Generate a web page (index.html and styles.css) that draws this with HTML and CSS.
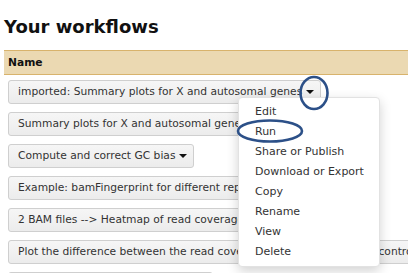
FILE: index.html
```html
<!DOCTYPE html>
<html lang="en">
<head>
    <meta charset="UTF-8">
    <title>Your workflows</title>
    <link rel="stylesheet" href="styles.css">
</head>
<body>
    <div class="page">
        <h2>Your workflows</h2>

        <table class="workflows">
            <thead>
                <tr><th>Name</th></tr>
            </thead>
            <tbody>
                <tr><td><div class="menubutton">imported: Summary plots for X and autosomal genes<span class="caret"></span></div></td></tr>
                <tr><td><div class="menubutton">Summary plots for X and autosomal genes<span class="caret"></span></div></td></tr>
                <tr><td><div class="menubutton">Compute and correct GC bias<span class="caret"></span></div></td></tr>
                <tr><td><div class="menubutton">Example: bamFingerprint for different replicates<span class="caret"></span></div></td></tr>
                <tr><td><div class="menubutton">2 BAM files --&gt; Heatmap of read coverage<span class="caret"></span></div></td></tr>
                <tr><td><div class="menubutton">Plot the difference between the read coverage of the ChIP-seq and control<span class="caret"></span></div></td></tr>
                <tr><td><div class="menubutton">Compute correlation of BAM files<span class="caret"></span></div></td></tr>
            </tbody>
        </table>

        <ul class="popmenu">
            <li>Edit</li>
            <li>Run</li>
            <li>Share or Publish</li>
            <li>Download or Export</li>
            <li>Copy</li>
            <li>Rename</li>
            <li>View</li>
            <li>Delete</li>
        </ul>

        <svg class="mark mark-caret" width="32" height="38" viewBox="0 0 32 38">
            <ellipse cx="16" cy="19" rx="13.5" ry="16" fill="none" stroke="#2c5088" stroke-width="2.6"/>
        </svg>
        <svg class="mark mark-run" width="70" height="26" viewBox="0 0 70 26">
            <ellipse cx="35" cy="13" rx="32" ry="10.5" fill="none" stroke="#2c5088" stroke-width="2.6"/>
        </svg>
    </div>
</body>
</html>
```

FILE: styles.css
```css
* {
    margin: 0;
    padding: 0;
    box-sizing: border-box;
}

body {
    font-family: 'DejaVu Sans', Verdana, sans-serif;
    font-size: 10.7px;
    color: #333;
    background: #fff;
    overflow: hidden;
}

.page {
    position: relative;
    padding: 15px 0 0 4px;
}

h2 {
    font-size: 18px;
    font-weight: bold;
    color: #111;
    line-height: 24px;
    margin-bottom: 11px;
}

.workflows {
    border-collapse: collapse;
    width: 404px;
}

.workflows th {
    background: #ebd9b2;
    border-top: 1px solid #d8b36c;
    border-bottom: 1px solid #d8b36c;
    text-align: left;
    font-weight: bold;
    color: #111;
    padding: 0 4px;
    height: 24px;
}

.workflows td {
    padding: 5px 4px 3px;
    white-space: nowrap;
}

.menubutton {
    display: inline-block;
    height: 24px;
    line-height: 22px;
    padding: 0 6px 0 9px;
    border: 1px solid #cfcfcf;
    border-radius: 3px;
    background: linear-gradient(#f6f6f6, #ececec);
    color: #333;
}

.caret {
    display: inline-block;
    width: 0;
    height: 0;
    margin-left: 4px;
    vertical-align: middle;
    border-top: 4px solid #111;
    border-left: 4px solid transparent;
    border-right: 4px solid transparent;
}

.popmenu {
    position: absolute;
    left: 238px;
    top: 97px;
    width: 142px;
    list-style: none;
    background: #fff;
    border: 1px solid #e2e2e2;
    border-radius: 4px;
    box-shadow: 0 4px 12px rgba(0, 0, 0, 0.18);
    padding: 4px 0;
}

.popmenu li {
    padding: 0 16px;
    line-height: 20px;
    white-space: nowrap;
    font-size: 11px;
    color: #333;
}

.mark {
    position: absolute;
}

.mark-caret {
    left: 298px;
    top: 74px;
}

.mark-run {
    left: 235px;
    top: 118px;
}
```
